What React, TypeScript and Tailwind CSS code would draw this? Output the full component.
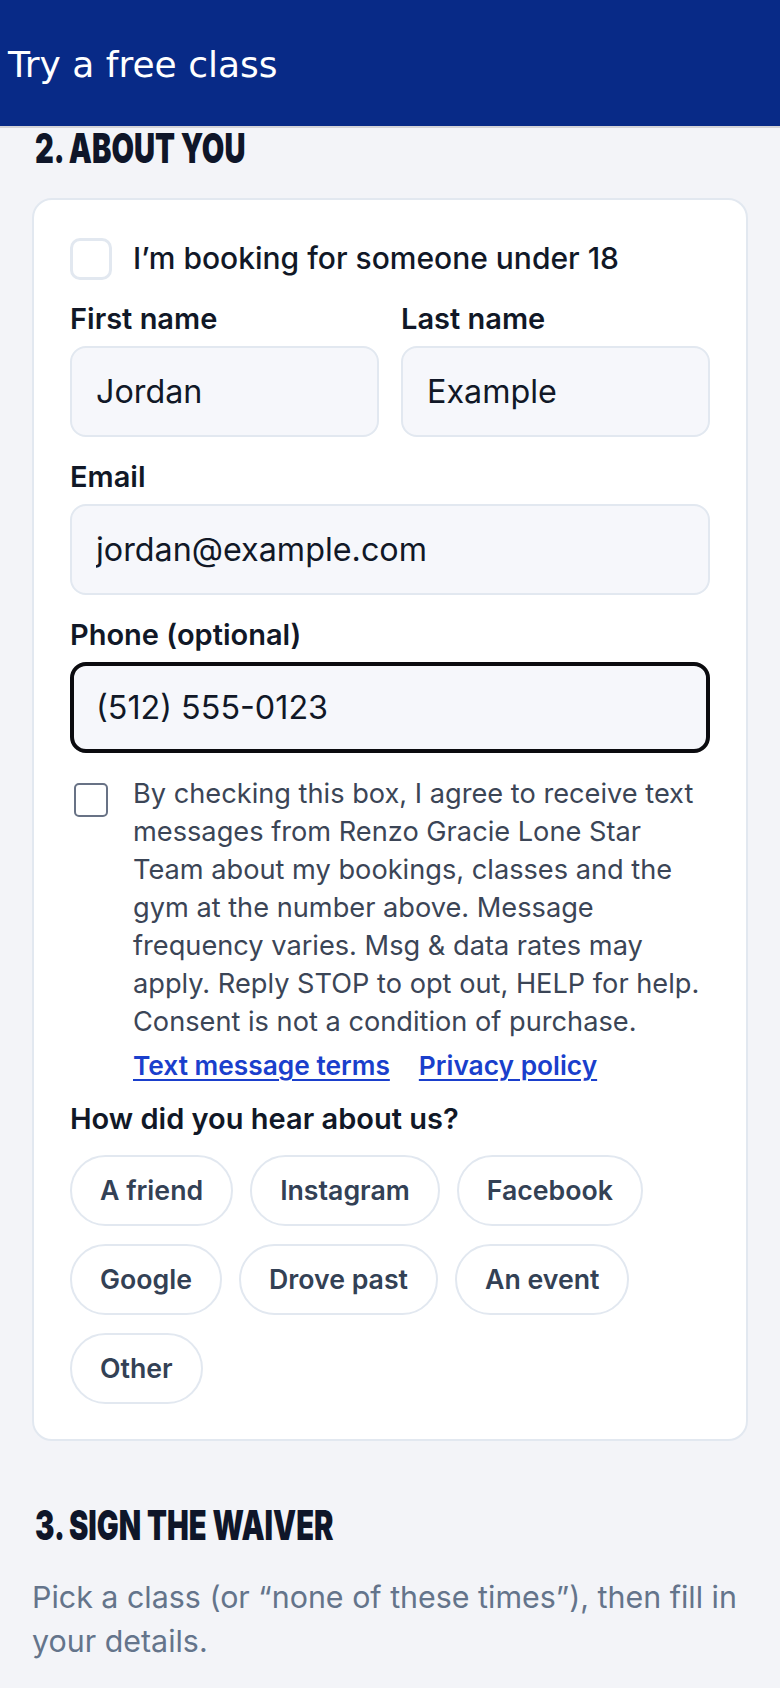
const sources = [
  ["A friend", "Instagram", "Facebook"],
  ["Google", "Drove past", "An event"],
  ["Other"],
];

function Field({
  label,
  value,
  focused = false,
}: {
  label: string;
  value: string;
  focused?: boolean;
}) {
  return (
    <div className="flex flex-col">
      <label className="mb-[9px] text-[29px] leading-[36px] font-semibold text-[#111827]">
        {label}
      </label>
      <input
        readOnly
        value={value}
        className={
          focused
            ? "h-[91px] w-full rounded-2xl border-4 border-[#0b0b0f] bg-[#f6f7fb] px-[22px] text-[32.3px] text-[#111827] outline-none"
            : "h-[91px] w-full rounded-2xl border-2 border-[#e2e8f0] bg-[#f6f7fb] px-6 text-[32.3px] text-[#111827] outline-none"
        }
      />
    </div>
  );
}

function SectionTitle({ children }: { children: string }) {
  return (
    <h2 className="ml-[3px] origin-left scale-x-[0.71] text-[41px] leading-[36px] font-black whitespace-nowrap text-[#0f1629] uppercase">
      {children}
    </h2>
  );
}

export default function App() {
  return (
    <div className="min-h-[1688px] bg-[#f3f4f8] font-['Inter',sans-serif]">
      <header className="flex h-[128px] items-center border-b-2 border-[#d4d4d8] bg-[#082a87] pt-1 pl-2">
        <span className="font-['DejaVu_Sans',sans-serif] text-[36px] text-white">
          Try a free class
        </span>
      </header>

      <main className="px-8">
        <div className="flex pt-[2px]">
          <SectionTitle>2. About you</SectionTitle>
        </div>

        <section className="mt-8 rounded-[20px] border-2 border-[#e2e8f0] bg-white px-[36px] pt-[36px] pb-[35px]">
          <div className="flex items-center gap-[21px]">
            <div className="h-[42px] w-[42px] shrink-0 rounded-[10px] border-[3px] border-[#e2e8f0] bg-white" />
            <span className="text-[30px] font-medium text-[#111827]">
              I’m booking for someone under 18
            </span>
          </div>

          <div className="mt-5 grid grid-cols-2 gap-[22px]">
            <Field label="First name" value="Jordan" />
            <Field label="Last name" value="Example" />
          </div>

          <div className="mt-[22px]">
            <Field label="Email" value="jordan@example.com" />
          </div>

          <div className="mt-[22px]">
            <Field label="Phone (optional)" value="(512) 555-0123" focused />
          </div>

          <div className="mt-[22px] flex gap-[21px]">
            <div className="flex w-[42px] shrink-0 justify-center pt-2">
              <div className="h-[34px] w-[34px] rounded-[5px] border-[2.5px] border-[#687285] bg-white" />
            </div>
            <div>
              <p className="text-[27.2px] leading-[38px] text-[#3b4556]">
                By checking this box, I agree to receive text messages from
                Renzo Gracie Lone Star Team about my bookings, classes and the
                gym at the number above. Message frequency varies. Msg &amp;
                data rates may apply. Reply STOP to opt out, HELP for help.
                Consent is not a condition of purchase.
              </p>
              <div className="mt-[6px] flex gap-[29px] text-[26.3px] leading-[38px] font-semibold text-[#1a3fcc]">
                <a href="#" className="underline decoration-2 underline-offset-4">
                  Text message terms
                </a>
                <a href="#" className="underline decoration-2 underline-offset-4">
                  Privacy policy
                </a>
              </div>
            </div>
          </div>

          <p className="mt-[14px] text-[29px] leading-[40px] font-semibold text-[#111827]">
            How did you hear about us?
          </p>
          <div className="mt-4 flex flex-col gap-[18px]">
            {sources.map((row, i) => (
              <div key={i} className="flex gap-[17px]">
                {row.map((s) => (
                  <button
                    key={s}
                    className="h-[71px] rounded-full border-2 border-[#e2e8f0] bg-white px-[28px] text-[26.7px] font-semibold text-[#334155]"
                  >
                    {s}
                  </button>
                ))}
              </div>
            ))}
          </div>
        </section>

        <div className="mt-[66px] flex">
          <SectionTitle>3. Sign the waiver</SectionTitle>
        </div>
        <p className="mt-[32px] text-[30.4px] leading-[44px] text-[#64748b]">
          Pick a class (or “none of these times”), then fill in your details.
        </p>
      </main>
    </div>
  );
}
